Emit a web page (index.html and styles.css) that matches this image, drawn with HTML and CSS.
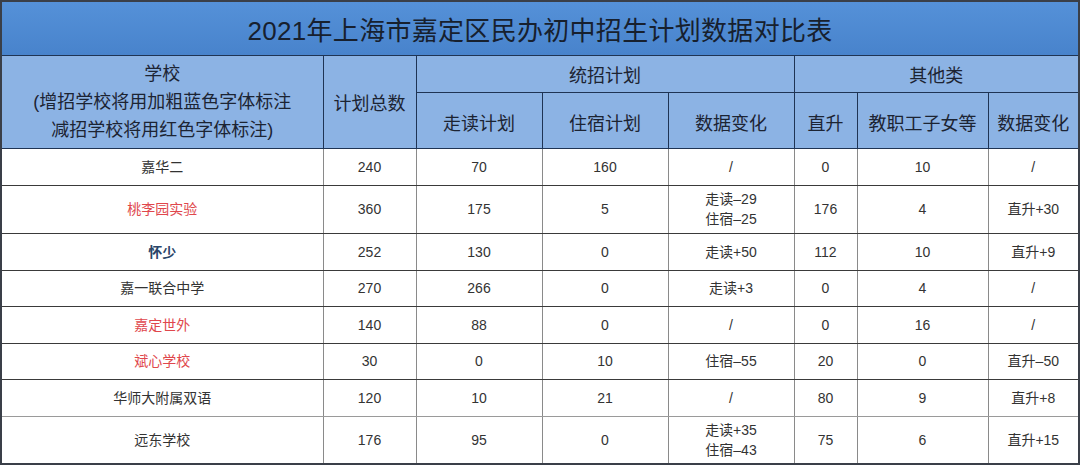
FILE: index.html
```html
<!DOCTYPE html>
<html lang="zh-CN">
<head>
<meta charset="utf-8">
<title>2021年上海市嘉定区民办初中招生计划数据对比表</title>
<link rel="stylesheet" href="styles.css">
</head>
<body>
<table class="plan">
  <colgroup>
    <col class="c-school">
    <col class="c-total">
    <col class="c-mid">
    <col class="c-mid">
    <col class="c-mid">
    <col class="c-up">
    <col class="c-staff">
    <col class="c-last">
  </colgroup>
  <thead>
    <tr class="title-row"><th colspan="8">2021年上海市嘉定区民办初中招生计划数据对比表</th></tr>
    <tr class="h1">
      <th rowspan="2" class="school-h">学校<br>(增招学校将用加粗蓝色字体标注<br>减招学校将用红色字体标注)</th>
      <th rowspan="2">计划总数</th>
      <th colspan="3">统招计划</th>
      <th colspan="3">其他类</th>
    </tr>
    <tr class="h2">
      <th>走读计划</th>
      <th>住宿计划</th>
      <th>数据变化</th>
      <th>直升</th>
      <th>教职工子女等</th>
      <th>数据变化</th>
    </tr>
  </thead>
  <tbody>
    <tr class="r-s"><td>嘉华二</td><td>240</td><td>70</td><td>160</td><td>/</td><td>0</td><td>10</td><td>/</td></tr>
    <tr class="r-t"><td class="dec">桃李园实验</td><td>360</td><td>175</td><td>5</td><td>走读–29<br>住宿–25</td><td>176</td><td>4</td><td>直升+30</td></tr>
    <tr class="r-s"><td class="inc">怀少</td><td>252</td><td>130</td><td>0</td><td>走读+50</td><td>112</td><td>10</td><td>直升+9</td></tr>
    <tr class="r-s"><td>嘉一联合中学</td><td>270</td><td>266</td><td>0</td><td>走读+3</td><td>0</td><td>4</td><td>/</td></tr>
    <tr class="r-s"><td class="dec">嘉定世外</td><td>140</td><td>88</td><td>0</td><td>/</td><td>0</td><td>16</td><td>/</td></tr>
    <tr class="r-s"><td class="dec">斌心学校</td><td>30</td><td>0</td><td>10</td><td>住宿–55</td><td>20</td><td>0</td><td>直升–50</td></tr>
    <tr class="r-s light"><td>华师大附属双语</td><td>120</td><td>10</td><td>21</td><td>/</td><td>80</td><td>9</td><td>直升+8</td></tr>
    <tr class="r-t last-row"><td>远东学校</td><td>176</td><td>95</td><td>0</td><td>走读+35<br>住宿–43</td><td>75</td><td>6</td><td>直升+15</td></tr>
  </tbody>
</table>
</body>
</html>
```
FILE: styles.css
```css
html, body {
  margin: 0;
  padding: 0;
  background: #ffffff;
}

body {
  font-family: "Liberation Sans", "Noto Sans CJK SC", sans-serif;
  color: #2e2e2e;
}

.plan {
  width: 1078px;
  table-layout: fixed;
  border-collapse: collapse;
  border: 2px solid #3a3f48;
}

.c-school { width: 322px; }
.c-total { width: 93px; }
.c-mid { width: 126px; }
.c-up { width: 63px; }
.c-staff { width: 131px; }
.c-last { width: 91px; }

.plan th {
  font-weight: 400;
  color: #1c2433;
  border: 1px solid #1f3454;
  text-align: center;
  vertical-align: middle;
  padding: 0;
}

.title-row th {
  height: 53px;
  font-size: 26px;
  color: #17202e;
  background: linear-gradient(#5591d8, #4883cc);
  letter-spacing: 0.3px;
}

.h1 th, .h2 th {
  background: #8cb3e4;
  font-size: 18px;
}

.h1 th {
  height: 36px;
}

.h2 th {
  height: 53px;
  padding-top: 2px;
}

.school-h {
  line-height: 28px;
}

.plan td {
  border-top: 1.5px solid #3a3a3a;
  border-bottom: 1.5px solid #3a3a3a;
  border-left: 1px solid #8a8a8a;
  border-right: 1px solid #8a8a8a;
  text-align: center;
  vertical-align: middle;
  font-size: 14px;
  padding: 0;
  line-height: 20px;
  color: #333333;
}

.r-s td { height: 35.5px; }
.r-t td { height: 47.5px; }
.last-row td { height: 46.5px; }

.light td { border-bottom-color: #9a9a9a; }

.plan td.dec { color: #e0474c; }
.plan td.inc { color: #2a4568; font-weight: 700; }
```
